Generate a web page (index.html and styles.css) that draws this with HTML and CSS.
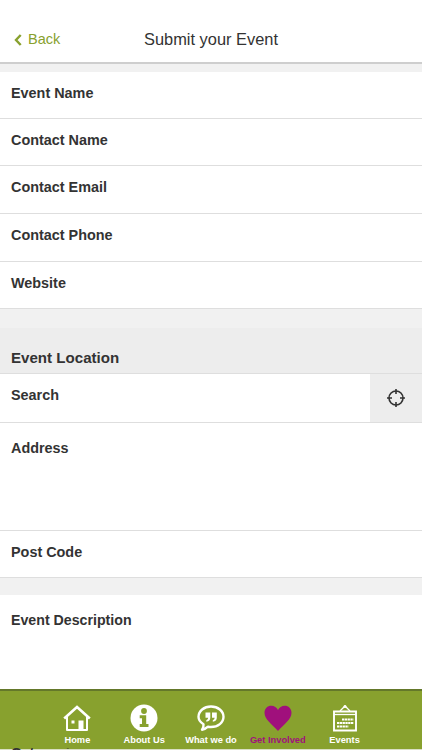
FILE: index.html
```html
<!DOCTYPE html>
<html lang="en">
<head>
<meta charset="utf-8">
<title>Submit your Event</title>
<link rel="stylesheet" href="styles.css">
</head>
<body>
<div class="app">
  <header class="header">
    <a class="back"><svg width="8" height="12" viewBox="0 0 8 12"><path d="M6.7 1 2 6l4.700 5" fill="none" stroke="currentColor" stroke-width="2.4"/></svg><span>Back</span></a>
    <h1 class="title">Submit your Event</h1>
  </header>
  <main class="form">
    <div class="gap gap-top"></div>
    <div class="row"><label>Event Name</label></div>
    <div class="row"><label>Contact Name</label></div>
    <div class="row tall"><label>Contact Email</label></div>
    <div class="row tall"><label>Contact Phone</label></div>
    <div class="row"><label>Website</label></div>
    <div class="gap gap-section"></div>
    <h2 class="section"><span>Event Location</span></h2>
    <div class="row search"><label>Search</label>
      <div class="locate"><svg width="20" height="20" viewBox="0 0 20 20" fill="none" stroke="#333" stroke-width="1.6"><circle cx="10" cy="10" r="7"/><path d="M10 1v5M10 14v5M1 10h5M14 10h5"/></svg></div>
    </div>
    <div class="row address"><label>Address</label></div>
    <div class="row post"><label>Post Code</label></div>
    <div class="gap gap-bottom"></div>
    <div class="row description"><label>Event Description</label></div>
  </main>
  <nav class="tabs">
    <a class="tab"><svg width="28" height="28" viewBox="0 0 28 28" fill="none" stroke="#fff" stroke-width="2"><path d="M1.2 14.500 14 3l12.800 11.500" stroke-width="2.600"/><path d="M4 12v14h20V12" stroke-linejoin="round"/><path d="M15.500 16.500h5v9.500h-5zM8.500 16.500h3v3h-3z" fill="#fff" stroke="none"/></svg><span>Home</span></a>
    <a class="tab"><svg width="28" height="28" viewBox="0 0 28 28"><circle cx="14" cy="14" r="13.5" fill="#fff"/><circle cx="14" cy="7" r="2.900" fill="#88a12e"/><path d="M9.700 11.300h6.500v8.700h2.300v3H9.700v-3H12v-5.700H9.700z" fill="#88a12e"/></svg><span>About Us</span></a>
    <a class="tab"><svg width="28" height="28" viewBox="0 0 28 28"><path d="M6.500 20.300C3.400 18.400 1.500 15.900 1.500 12.800 1.500 7 7 2.500 14 2.500S26.500 7 26.500 12.800 21 23 14 23q-1.500 0-3-.3-2.700 2.600-6 3 1.800-2.600 1.500-5.400z" fill="none" stroke="#fff" stroke-width="2.400" stroke-linejoin="round"/><path d="M8.500 8.500h4.800v5.300q0 3.400-4 4v-1.600q1.800-.6 1.900-2.500H8.500zM15 8.500h4.800v5.300q0 3.400-4 4v-1.600q1.800-.6 1.900-2.500H15z" fill="#fff"/></svg><span>What we do</span></a>
    <a class="tab active"><svg width="28" height="28" viewBox="0 0 28 28"><path d="M14 27C8 20 .5 15.700.5 8.800.5 4.400 3.500 1.700 7.300 1.700c3 0 5.500 1.600 6.700 4.300 1.200-2.700 3.700-4.300 6.700-4.300 3.800 0 6.800 2.700 6.800 7.100C27.500 15.700 20 20 14 27z" fill="#a0107c"/></svg><span>Get Involved</span></a>
    <a class="tab"><svg width="28" height="28" viewBox="0 0 28 28" fill="none" stroke="#fff"><path d="M3 7.500h22v19H3z" stroke-width="1.900"/><path d="M3 10.500h22" stroke-width="1.300"/><path d="m9 7 5-5 5 5" stroke-width="1.300"/><path d="M11 15.500h11.500M6 19h16.500M6 22.500h11.500" stroke-width="2.200" stroke-dasharray="2.300 .5"/><circle cx="14" cy="2.400" r="1.500" fill="#fff" stroke="none"/></svg><span>Events</span></a>
  </nav>
  <div class="peek"><label>Categories</label></div>
</div>
</body>
</html>
```
FILE: styles.css
```css
* { box-sizing: border-box; }
body {
  margin: 0;
  background: #fff;
  color: #333;
  font-family: "Liberation Sans", Arial, sans-serif;
}
.app {
  height: 750px;
  display: flex;
  flex-direction: column;
  overflow: hidden;
}
.header {
  height: 64px;
  flex: none;
  display: grid;
  grid-template-columns: 100px 1fr 100px;
  padding-top: 30px;
  border-bottom: 2px solid #cecece;
  line-height: 19px;
}
.back {
  display: flex;
  align-items: center;
  gap: 6px;
  height: 19px;
  padding-left: 14px;
  color: #88a12e;
  font-size: 14.5px;
}
.title {
  margin: 0;
  text-align: center;
  font-size: 16.4px;
  font-weight: 400;
  line-height: 19px;
}
.form { flex: 1; min-height: 0; }
.gap { background: #f1f1f1; }
.gap-top { height: 8px; }
.gap-section { height: 19px; }
.gap-bottom { height: 17px; }
.row {
  display: flex;
  height: 47px;
  padding: 12px 0 0 11px;
  border-bottom: 1px solid #dedede;
  font-size: 14.4px;
  font-weight: 700;
  line-height: 18px;
}
.row.tall { height: 48px; }
.section {
  display: flex;
  height: 46px;
  margin: 0;
  padding: 21px 11px 0;
  background: #ededed;
  border-bottom: 1px solid #dedede;
  font-size: 15.1px;
  line-height: 18px;
}
.row.search {
  height: 49px;
  justify-content: space-between;
  padding-top: 0;
}
.search label { padding-top: 12px; }
.locate {
  display: flex;
  align-items: center;
  justify-content: center;
  width: 52px;
  background: #ededed;
}
.row.address { height: 108px; padding-top: 16px; }
.row.post { height: 47px; }
.row.description {
  border: 0;
  padding-top: 16px;
  font-size: 14.2px;
}
.tabs {
  display: flex;
  flex: none;
  justify-content: center;
  height: 59px;
  padding-top: 13px;
  background: #88a12e;
  border-top: 2px solid #64782a;
}
.tab {
  display: flex;
  flex-direction: column;
  align-items: center;
  gap: 3px;
  width: 66.8px;
  color: #fff;
  font-size: 9.3px;
  font-weight: 700;
  line-height: 11px;
  white-space: nowrap;
}
.active { color: #a0107c; }
.peek {
  flex: none;
  height: 2px;
  padding-left: 11px;
  overflow: hidden;
  background: linear-gradient(#88a12e 50%, #d9dfc4 50%);
  font-size: 14.5px;
  font-weight: 700;
  line-height: 10px;
}
```
